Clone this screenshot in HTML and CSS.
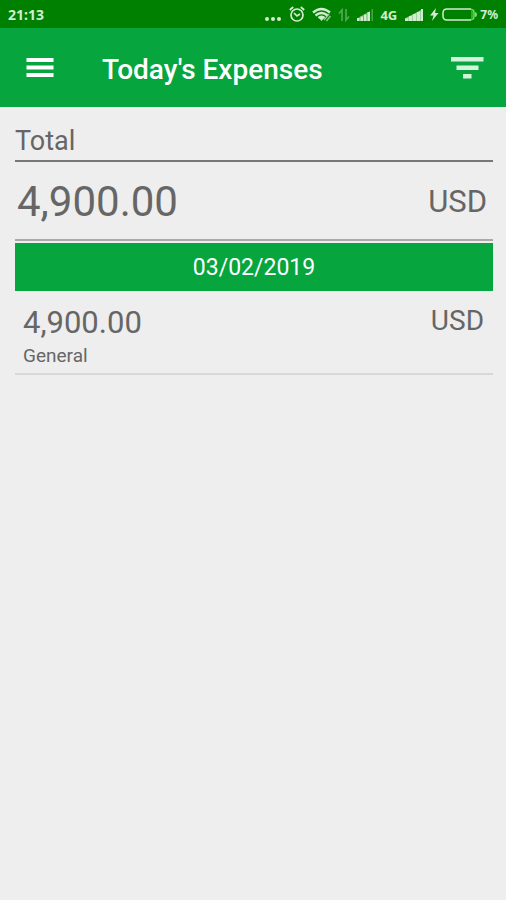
FILE: index.html
```html
<!DOCTYPE html>
<html lang="en">
<head>
<meta charset="utf-8">
<meta name="viewport" content="width=device-width, initial-scale=1">
<title>Today's Expenses</title>
<link rel="stylesheet" href="styles.css">
</head>
<body>
<div class="status">
  <time class="clock">21:13</time>
  <svg class="dots" width="16" height="28" viewBox="0 0 16 28" aria-hidden="true"><circle cx="2" cy="19" r="2"/><circle cx="8" cy="19" r="2"/><circle cx="14" cy="19" r="2"/></svg>
  <svg class="alarm" width="16" height="28" viewBox="0 0 16 28" aria-hidden="true"><g fill="none" stroke="currentColor" stroke-width="1.7"><circle cx="8" cy="15" r="6"/><path d="M5 13l3 3 3-2M.8 10l3.400-3M15.200 10l-3.400-3"/></g></svg>
  <svg class="wifi" width="20" height="28" viewBox="0 0 20 28" aria-hidden="true"><g fill="none" stroke="currentColor" stroke-width="2.300"><path d="M1 12.500Q9.500 5.500 18 12.500M3.500 15.500Q9.500 10.500 15.500 15.500M6.500 18Q9.500 15.500 12.500 18"/></g><path d="M7.500 18.500L9.500 17l2 1.500-2 2.500z"/><path d="M12 20l5-6M14.500 21l4-5" fill="none" stroke="currentColor" stroke-width="1.500" opacity=".65"/></svg>
  <svg class="data" width="12" height="28" viewBox="0 0 12 28" aria-hidden="true"><path d="M4 21V10L1 13.500M8 9v11l3-3.500" fill="none" stroke="currentColor" stroke-width="1.600"/></svg>
  <svg class="signal" width="17" height="28" viewBox="0 0 17 28" aria-hidden="true"><path d="M0 21v-2.500L13 11v10z" opacity=".5"/><path d="M0 18h2.500v3H0zM3.500 16.500H6V21H3.500zM7 14.500h2.500V21H7zM10.500 12H13v9h-2.500z"/><path d="M14.500 9H16v12h-1.500z" opacity=".35"/></svg>
  <span class="network">4G</span>
  <svg class="signal" width="19" height="28" viewBox="0 0 19 28" aria-hidden="true"><path d="M0 21v-2.500L18 9v12z" opacity=".75"/><path d="M0 18.500h3V21H0zM4 16h3v5H4zM8 14h3v7H8zM12 12h3v9h-3zM16 9h2v12h-2z"/></svg>
  <svg class="bolt" width="9" height="28" viewBox="0 0 9 28" aria-hidden="true"><path d="M6 8L0 15.500h3.500L2 21l6.500-8H5z"/></svg>
  <svg class="battery" width="35" height="28" viewBox="0 0 35 28" aria-hidden="true"><path d="M29 9h2q2 0 2 3v5q0 3-2 3h-2z" fill="#27b51c"/><path d="M29 9H5Q1 9 1 13v3q0 4 4 4h24" fill="none" stroke="currentColor" stroke-width="1.500"/><path d="M29 9q3 0 3 4v3q0 4-3 4" fill="none" stroke="#8bd184"/><path d="M33 12q2 0 2 2.500T33 17z" fill="#8bd184"/></svg>
  <span class="charge">7%</span>
</div>
<header class="bar">
  <button class="icon" type="button" aria-label="Menu"><svg width="28" height="20" viewBox="0 0 28 20" aria-hidden="true"><path d="M.5 0H27.500v4H.5zM.5 7.500H27.500v4H.5zM.5 15H27.500v4H.5z"/></svg></button>
  <h1 class="title">Today's Expenses</h1>
  <button class="icon filter" type="button" aria-label="Filter"><svg width="34" height="22" viewBox="0 0 34 22" aria-hidden="true"><path d="M1 0H33.500v4.500H1zM6.500 8.500H28.500V13H6.500zM13 17h8.500v4.500H13z"/></svg></button>
</header>
<main class="content">
  <h2 class="heading">Total</h2>
  <div class="total"><span class="sum">4,900.00</span><span class="currency">USD</span></div>
  <h3 class="date">03/02/2019</h3>
  <ul class="list">
    <li class="entry">
      <div class="detail"><span class="amount">4,900.00</span><span class="category">General</span></div>
      <span class="unit">USD</span>
    </li>
  </ul>
</main>
</body>
</html>
```
FILE: styles.css
```css
* { box-sizing: border-box; }

body {
  margin: 0;
  min-height: 100vh;
  background: #eee;
  color: #666;
  font-family: Roboto, sans-serif;
}

h1, h2, h3, ul { margin: 0; padding: 0; font-weight: 400; }

svg { display: block; fill: currentColor; }

.status {
  display: flex;
  align-items: center;
  height: 28px;
  padding: 0 8px;
  background: #008000;
  color: #d3ecd0;
  font: 700 14px/28px "Noto Sans", sans-serif;
}

.status svg { flex: none; }
.clock { margin-right: auto; padding-top: 1px; }
.dots { margin-right: 8px; }
.alarm { margin-right: 7px; }
.wifi { margin-right: 6px; }
.data { margin-right: 7px; opacity: .4; }
.signal { margin-right: 6px; }
.network { margin-right: 8px; padding-top: 2px; font-size: 13px; }
.bolt { margin-right: 3px; }
.battery { margin-right: 3px; }
.charge { padding-top: 2px; font-size: 12px; }

.bar {
  display: flex;
  align-items: center;
  height: 79px;
  padding: 0 22px 0 26px;
  background: #06a53d;
  color: #fff;
}

.icon {
  display: block;
  padding: 0;
  border: 0;
  background: none;
  color: inherit;
}

.filter { color: #d5f3dc; }

.title {
  flex: 1;
  padding: 4px 0 0 48px;
  font-size: 28px;
  font-weight: 500;
  line-height: 36px;
}

.content { padding: 14px 13px 0 15px; }

.heading {
  padding-top: 2px;
  border-bottom: 2px solid #777;
  font-size: 27px;
  line-height: 37px;
}

.total {
  display: flex;
  align-items: center;
  justify-content: space-between;
  height: 79px;
  margin-bottom: 2px;
  padding: 2px 6px 0 2px;
  border-bottom: 2px solid #aaa;
}

.sum { font-size: 42px; }
.currency { font-size: 31px; }

.date {
  padding-top: 2px;
  background: #06a53d;
  color: #fff;
  font-size: 23px;
  line-height: 46px;
  text-align: center;
}

.list { list-style: none; }

.entry {
  display: flex;
  justify-content: space-between;
  padding: 12px 9px 5px 8px;
  border-bottom: 2px solid #d8d8d8;
}

.detail { display: flex; flex-direction: column; }
.amount { font-size: 31px; line-height: 40px; }
.category { font-size: 19px; line-height: 25px; }
.unit { font-size: 28px; line-height: 36px; }
```
